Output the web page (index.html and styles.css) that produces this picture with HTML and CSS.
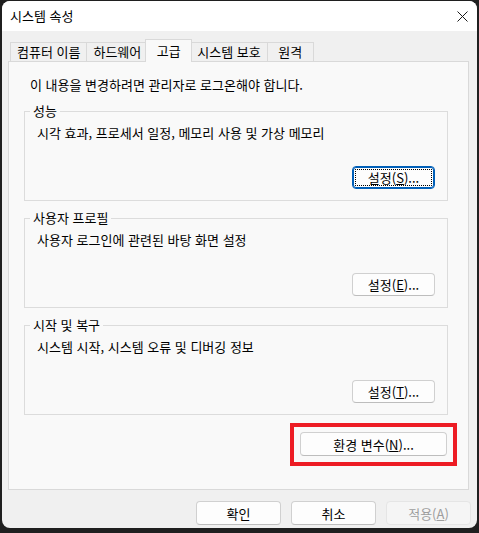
FILE: index.html
```
<!DOCTYPE html>
<html lang="ko">
<head>
    <meta charset="UTF-8">
    <meta name="viewport" content="width=device-width, initial-scale=1.0">
    <title>시스템 속성</title>
    <link rel="stylesheet" href="styles.css">
</head>
<body>
<div class="window">
    <div class="titlebar">
        <span class="title">시스템 속성</span>
        <svg class="close" width="11" height="11" viewBox="0 0 11 11">
            <path d="M0.5 0.5 L10.5 10.5 M10.5 0.5 L0.5 10.5" stroke="#1a1a1a" stroke-width="1" fill="none"/>
        </svg>
    </div>

    <div class="tabs">
        <div class="tab">컴퓨터 이름</div>
        <div class="tab">하드웨어</div>
        <div class="tab active">고급</div>
        <div class="tab">시스템 보호</div>
        <div class="tab">원격</div>
    </div>

    <div class="panel">
        <p class="note">이 내용을 변경하려면 관리자로 로그온해야 합니다.</p>

        <div class="group">
            <div class="group-title">성능</div>
            <p class="desc">시각 효과, 프로세서 일정, 메모리 사용 및 가상 메모리</p>
            <button class="btn settings focused">설정(<u>S</u>)...</button>
        </div>

        <div class="group">
            <div class="group-title">사용자 프로필</div>
            <p class="desc">사용자 로그인에 관련된 바탕 화면 설정</p>
            <button class="btn settings">설정(<u>E</u>)...</button>
        </div>

        <div class="group">
            <div class="group-title">시작 및 복구</div>
            <p class="desc">시스템 시작, 시스템 오류 및 디버깅 정보</p>
            <button class="btn settings">설정(<u>T</u>)...</button>
        </div>

        <div class="highlight">
            <button class="btn env">환경 변수(<u>N</u>)...</button>
        </div>
    </div>

    <div class="footer">
        <button class="btn">확인</button>
        <button class="btn">취소</button>
        <button class="btn" disabled>적용(<u>A</u>)</button>
    </div>
</div>
</body>
</html>
```

FILE: styles.css
```
* { box-sizing: border-box; }
html, body { margin: 0; background: #1f1f1f; }
body { font-family: "Noto Sans CJK KR", "Noto Sans", sans-serif; font-size: 13px; color: #000; }

.window { width: 475px; height: 527px; margin: 1px 0 0 2px; background: #f0f0f0; border-radius: 8px; overflow: hidden; }

.titlebar { display: flex; justify-content: space-between; align-items: center; height: 30px; padding: 0 9px 0 8px; background: #fff; }
.title { line-height: 16px; }
.close { display: block; }

.tabs { display: flex; align-items: flex-end; height: 30px; padding: 8px 0 0 8px; }
.tab { height: 19px; line-height: 18px; min-width: 47px; padding: 0 6px; margin-right: -1px; text-align: center; border: 1px solid #d9d9d9; border-bottom: none; background: #f0f0f0; }
.tab.active { height: 23px; line-height: 21px; margin: 0 -2px -1px -2px; background: #f9f9f9; position: relative; z-index: 1; }

.panel { width: 461px; height: 429px; margin-left: 6px; padding: 15px 0 0 15px; border: 1px solid #d9d9d9; background: #f9f9f9; }
.note { margin: 0; padding-left: 6px; line-height: 16px; }

.group { width: 424px; height: 90px; margin-top: 17px; padding: 0 12px; border: 1px solid #dcdcdc; }
.note + .group { margin-top: 18px; }
.group-title { width: fit-content; margin: -9px 0 0 -7px; padding: 0 3px; line-height: 16px; background: #f9f9f9; }
.desc { margin: 6px 0 0 0; line-height: 16px; }

.btn { font: inherit; color: #000; padding: 0; background: #fdfdfd; border: 1px solid #d0d0d0; border-bottom-color: #bdbdbd; border-radius: 4px; width: 85px; height: 24px; }
.btn u { text-decoration: underline; }
.btn:disabled { color: #9d9d9d; background: #f5f5f5; border-color: #e5e5e5; }
.btn.settings { display: block; width: 83px; height: 23px; margin: 25px 0 0 auto; }
.btn.focused { border-color: #005fb8; box-shadow: inset 0 0 0 1px #005fb8; outline: 1px dotted #000; outline-offset: -4px; }

.highlight { width: 167px; margin: 8px 11px 0 auto; padding: 5px 6px 6px 6px; border: 4px solid #ed1c24; }
.btn.env { display: block; width: 147px; height: 24px; }

.footer { display: flex; justify-content: flex-end; gap: 10px; padding: 11px 6px 0 0; }
```
